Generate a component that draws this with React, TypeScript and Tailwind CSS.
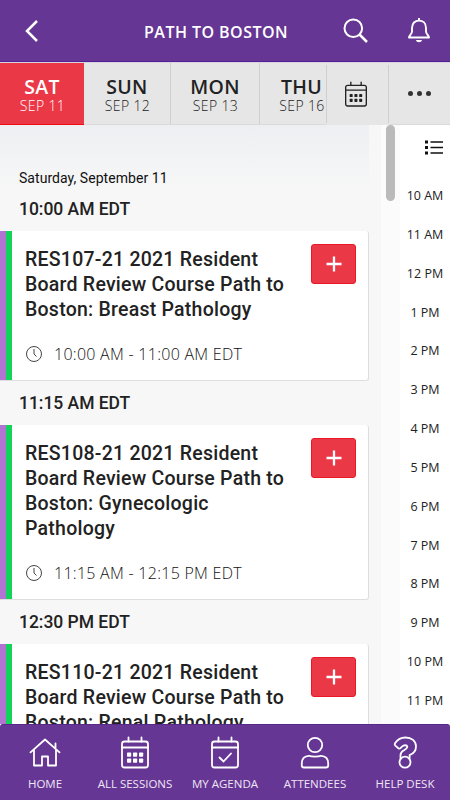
import React from "react";

const OPEN = "font-['Open_Sans','Noto_Sans',sans-serif]";
const ROBOTO = "font-['Roboto','Noto_Sans',sans-serif]";

const days = [
  { day: "SAT", date: "SEP 11", cell: "w-[84px] bg-[#eb3847] text-white border-b-[#f00b12]", dim: "text-white" },
  { day: "SUN", date: "SEP 12", cell: "w-[87px] border-r border-r-[#cfcfcf] border-b-[#dadada] text-[#222]", dim: "text-[#222]" },
  { day: "MON", date: "SEP 13", cell: "w-[89px] border-r border-r-[#cfcfcf] border-b-[#dadada] text-[#222]", dim: "text-[#222]" },
  { day: "THU", date: "SEP 16", cell: "w-[83px] border-b-[#dadada] text-[#222]", dim: "text-[#222]" },
];

const sessions = [
  {
    start: "10:00 AM EDT",
    lines: ["RES107-21 2021 Resident", "Board Review Course Path to", "Boston: Breast Pathology"],
    time: "10:00 AM - 11:00 AM EDT",
  },
  {
    start: "11:15 AM EDT",
    lines: ["RES108-21 2021 Resident", "Board Review Course Path to", "Boston: Gynecologic", "Pathology"],
    time: "11:15 AM - 12:15 PM EDT",
  },
  {
    start: "12:30 PM EDT",
    lines: ["RES110-21 2021 Resident", "Board Review Course Path to", "Boston: Renal Pathology"],
    time: "",
  },
];

const hours = ["10 AM", "11 AM", "12 PM", "1 PM", "2 PM", "3 PM", "4 PM", "5 PM", "6 PM", "7 PM", "8 PM", "9 PM", "10 PM", "11 PM"];

function Dots({ size }: { size: number }) {
  return (
    <g fill="currentColor" stroke="none">
      {[0, 1, 2].map((c) =>
        [0, 1].map((r) => (
          <rect key={`${c}${r}`} x={7 + c * 6} y={16.5 + r * 6} width={size} height={size} rx="0.7" />
        ))
      )}
    </g>
  );
}

function CalendarFrame({ children, className, weight }: { children: React.ReactNode; className: string; weight: number }) {
  return (
    <svg viewBox="0 0 30 34" className={className} fill="none" stroke="currentColor" strokeWidth={weight} strokeLinecap="round">
      <rect x="2" y="5.5" width="26" height="26" rx="2.5" />
      <path d="M2 11.5H28M8.500 1.500V5.500M21.500 1.500V5.500" />
      {children}
    </svg>
  );
}

const navSvg = { fill: "none", stroke: "currentColor", strokeWidth: 1.8, strokeLinecap: "round" as const, strokeLinejoin: "round" as const };

const nav = [
  {
    label: "HOME",
    icon: (
      <svg viewBox="0 0 32 32" className="h-8 w-8" {...navSvg}>
        <path d="M1.500 15.300 16 2.500 30.500 15.300M5 13v15.500h8V19.500h6v9h8V13M26.500 11V6.500" />
      </svg>
    ),
  },
  {
    label: "ALL SESSIONS",
    icon: (
      <CalendarFrame className="h-[34px] w-[30px]" weight={1.8}>
        <Dots size={4.2} />
      </CalendarFrame>
    ),
  },
  {
    label: "MY AGENDA",
    icon: (
      <CalendarFrame className="h-[34px] w-[30px]" weight={1.8}>
        <path d="m9.500 21.500 4 4 7.500-8" />
      </CalendarFrame>
    ),
  },
  {
    label: "ATTENDEES",
    icon: (
      <svg viewBox="0 0 30 34" className="h-[34px] w-[30px]" {...navSvg}>
        <circle cx="15" cy="9" r="7.200" />
        <path d="M9 19.800C4.500 20 1.800 23 1.800 27.500V29.500Q1.800 31.500 4 31.500H26Q28.200 31.500 28.200 29.500V27.500C28.200 23 25.500 20 21 19.800C18.500 21 11.500 21 9 19.800Z" />
      </svg>
    ),
  },
  {
    label: "HELP DESK",
    icon: (
      <svg viewBox="0 0 30 34" className="h-[34px] w-[30px]" {...navSvg}>
        <circle cx="15" cy="26.200" r="5.500" />
        <path d="M19.600 22.500V19.200C23 17.800 26 15.500 26 10.400C26 5 21.500 1.500 15.500 1.500C11 1.500 7.500 3.500 5 7.200Q4.200 8.700 5.300 9.600L8.400 12.300Q9.500 13.100 10.500 12.200L12 10.700C14 8.700 16.900 8.900 17.300 10.500C17.600 12.200 16 13 13.500 14.500C11.500 15.700 10.500 17 10.500 19.200V22.500" />
      </svg>
    ),
  },
];

export default function App() {
  return (
    <div className={`flex h-[800px] w-[450px] flex-col overflow-hidden bg-white text-[#222] ${OPEN}`}>
      <header className="grid h-[62px] shrink-0 grid-cols-[90px_1fr_109px] items-center border-b border-[#552096] bg-[#663694] text-white">
        <svg viewBox="0 0 14 24" className="ml-[25px] h-6 w-[14px]" fill="none" stroke="currentColor" strokeWidth="2.500">
          <path d="M12 2 2 12 12 22" />
        </svg>
        <h1 className="whitespace-nowrap pl-px pt-[2px] text-center text-[16px] font-semibold tracking-[0.450px]">PATH TO BOSTON</h1>
        <div className="flex items-center gap-[39px] pl-[2px]">
          <svg viewBox="0 0 25 25" className="h-[25px] w-[25px] shrink-0" fill="none" stroke="currentColor" strokeWidth="2">
            <circle cx="10.300" cy="10.300" r="8.800" />
            <path d="m16.500 16.500 7.500 7.500" strokeWidth="2.500" />
          </svg>
          <svg viewBox="0 0 24 26" className="-mt-px h-[26px] w-6 shrink-0" fill="none" stroke="currentColor" strokeWidth="1.900" strokeLinejoin="round">
            <path d="M12 1v2.500M5 15V11C5 6.300 8 3.600 12 3.600S19 6.300 19 11V14.500C19 17 22 18.500 22 20.500H2C2 18.500 5 17 5 14.500" />
            <path d="M9 23C9.500 26 14.500 26 15 23Z" fill="currentColor" stroke="none" />
          </svg>
        </div>
      </header>

      <div className="flex h-[63px] shrink-0 border-t border-[#d9d5df] bg-[#e6e6e6]">
        <div className="flex w-[326px] overflow-hidden">
          {days.map((d) => (
            <div key={d.day} className={`flex shrink-0 flex-col items-center border-b pt-[12px] ${d.cell}`}>
              <span className="text-[19.500px] font-semibold leading-[23px] tracking-[0.300px]">{d.day}</span>
              <span className={`whitespace-nowrap pl-px text-[14px] font-light leading-[16px] tracking-[0.350px] ${d.dim}`}>{d.date}</span>
            </div>
          ))}
        </div>
        <div className="my-[2px] flex w-[63px] items-center justify-center border-x border-[#cfcfcf]">
          <CalendarFrame className="ml-[-4px] h-[27px] w-6 text-[#222]" weight={1.700}>
            <Dots size={3.800} />
          </CalendarFrame>
        </div>
        <div className="flex grow items-center justify-center gap-1 border-b border-[#dadada]">
          {[0, 1, 2].map((n) => (
            <i key={n} className="h-[5px] w-[5px] rounded-full bg-[#333]" />
          ))}
        </div>
      </div>

      <main className="flex min-h-0 grow overflow-hidden bg-white">
        <section className={`w-[381px] shrink-0 bg-[#f7f7f7] ${ROBOTO}`}>
          <div className="h-[65px] w-[369px] bg-linear-to-b from-[#edeff2] to-[#f7f7f7] pl-[19px] pt-[43px] text-[14px] leading-[20px] tracking-[0.050px] text-[#111]">
            Saturday, September 11
          </div>
          {sessions.map((s, i) => (
            <div key={s.start}>
              <h2 className={`pl-[19px] text-[17.500px] font-medium tracking-[-0.030px] ${i === 0 ? "h-[41px] leading-[38px]" : "h-[44px] leading-[44px]"}`}>{s.start}</h2>
              <article className="flex w-[369px] rounded-r-[3px] border-b border-r border-[#dedede] bg-white">
                <div className="w-[6px] bg-[#b174d2]" />
                <div className="w-[6px] bg-[#13d45b]" />
                <div className="flex grow flex-col pb-[13px] pl-[13px] pt-[16px]">
                  <div className="flex">
                    <h3 className="w-[286px] whitespace-nowrap text-[19.500px] font-medium leading-[25px] tracking-[0.240px]">
                      {s.lines.map((l) => (
                        <span key={l} className="block">{l}</span>
                      ))}
                    </h3>
                    <button className="-mt-[3px] flex h-10 w-[45px] items-center justify-center rounded-[3px] border border-[#ea1826] bg-[#eb3847]">
                      <svg viewBox="0 0 16 16" className="h-4 w-4" stroke="white" strokeWidth="2.300">
                        <path d="M8 .5v15M.5 8h15" />
                      </svg>
                    </button>
                  </div>
                  {s.time && (
                    <div className={`mt-[19px] flex h-[26px] items-center whitespace-nowrap text-[16px] font-light tracking-[0.270px] text-[#111] ${OPEN}`}>
                      <svg viewBox="0 0 18 18" className="mr-[11px] h-[18px] w-[18px]" fill="none" stroke="#444" strokeWidth="1">
                        <circle cx="9" cy="9" r="7.500" />
                        <path d="M9 4v5l2.500 2.500" />
                      </svg>
                      {s.time}
                    </div>
                  )}
                </div>
              </article>
            </div>
          ))}
        </section>
        <div className="flex w-[19px] shrink-0 justify-center bg-[#fbfbfb]">
          <div className="h-[76px] w-[9px] rounded-full bg-[#bababa]" />
        </div>
        <aside className="flex grow flex-col items-center text-[12.500px] text-[#222]">
          <svg viewBox="0 0 18 15" className="mb-[21px] ml-[18px] mt-[15px] h-[15px] w-[18px] shrink-0" stroke="#111" strokeWidth="1.500" fill="#111">
            <path d="M5.500 2H18M5.500 7.500H18M5.500 13H18" />
            <path d="M0 2H3M0 7.500H3M0 13H3" strokeWidth="3" />
          </svg>
          {hours.map((h) => (
            <div key={h} className="h-[38.850px] shrink-0 whitespace-nowrap leading-[39.500px]">{h}</div>
          ))}
        </aside>
      </main>

      <footer className="grid h-[76px] shrink-0 grid-cols-5 rounded-t-[3px] border-t border-[#57278a] bg-[#663694] text-white">
        {nav.map((n) => (
          <div key={n.label} className="flex flex-col items-center pt-[11px]">
            <div className="flex h-[34px] items-center">{n.icon}</div>
            <span className="mt-[5px] whitespace-nowrap text-[11.500px] leading-[18px] text-[#efe6f5]">{n.label}</span>
          </div>
        ))}
      </footer>
    </div>
  );
}
